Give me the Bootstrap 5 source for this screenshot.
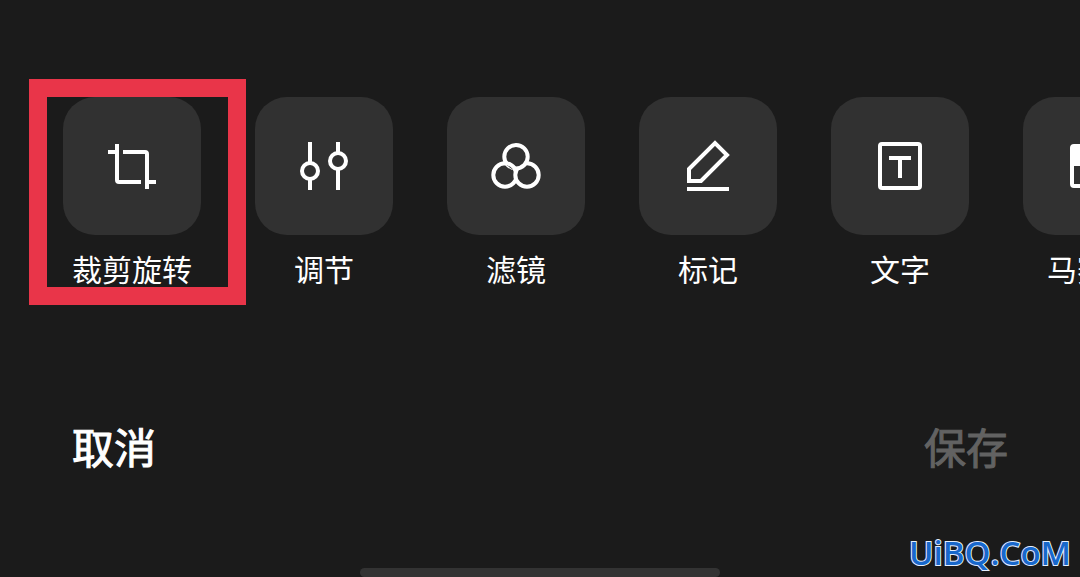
<!DOCTYPE html>
<html lang="zh-CN">
<head>
<meta charset="utf-8">
<meta name="viewport" content="width=device-width, initial-scale=1">
<title>编辑图片</title>
<link href="https://cdn.jsdelivr.net/npm/bootstrap@5.3.0/dist/css/bootstrap.min.css" rel="stylesheet">
<style>
  body { background: #1b1b1b; color: #fff; font-family: "Noto Sans CJK SC", sans-serif; }
  .tools { gap: 54px; padding: 97px 0 24px 63px; }
  .tool { width: 138px; font-size: 30px; line-height: 44px; color: #fff; }
  .tile { width: 138px; height: 138px; border-radius: 32px; background: #313131; margin-bottom: 11px; }
  .tile svg { width: 60px; height: 60px; fill: none; stroke: #fff; stroke-width: 4; }
  .highlight { top: -18px; left: -34px; width: 217px; height: 226px; border: 18px solid #e93549; pointer-events: none; }
  .actions { padding: 0 72px; margin-top: 102px; }
  .action { font-size: 42px; line-height: 60px; color: #fff; -webkit-text-stroke: 1px; }
  .action:disabled { color: #626262; }
  .home-bar { width: 33.333%; height: 9px; border-radius: 5px; background: #333; }
  .watermark { right: 9px; bottom: 4px; font: 600 33px/40px "Open Sans", sans-serif; color: #1868cc; -webkit-text-stroke: 2px #e4efff; paint-order: stroke fill; }
</style>
</head>
<body class="vh-100 overflow-hidden position-relative d-flex flex-column">
<nav class="tools d-flex overflow-hidden flex-shrink-0" aria-label="编辑工具">
  <button type="button" class="tool border-0 bg-transparent p-0 flex-shrink-0 text-nowrap position-relative">
    <span class="tile d-flex align-items-center justify-content-center">
      <svg viewBox="0 0 60 60" aria-hidden="true"><path d="M15 8V44Q15 46 17 46H39M6 16H13M21 16H43Q45 16 45 18V53M47 46H54"/></svg>
    </span>裁剪旋转
    <span class="highlight position-absolute"></span>
  </button>
  <button type="button" class="tool border-0 bg-transparent p-0 flex-shrink-0 text-nowrap">
    <span class="tile d-flex align-items-center justify-content-center">
      <svg viewBox="0 0 60 60" aria-hidden="true"><path d="M16 6V27M16 43V54M44 6V17M44 33V54"/><circle cx="16" cy="35" r="8"/><circle cx="44" cy="25" r="8"/></svg>
    </span>调节
  </button>
  <button type="button" class="tool border-0 bg-transparent p-0 flex-shrink-0 text-nowrap">
    <span class="tile d-flex align-items-center justify-content-center">
      <svg viewBox="0 0 60 60" aria-hidden="true"><g fill="#313131"><circle cx="19" cy="39" r="11.7"/><circle cx="41" cy="39" r="11.7"/><circle cx="30" cy="20.7" r="11.7"/><path d="M18 27.3A11.7 11.7 0 0 1 30.3 36"/></g></svg>
    </span>滤镜
  </button>
  <button type="button" class="tool border-0 bg-transparent p-0 flex-shrink-0 text-nowrap">
    <span class="tile d-flex align-items-center justify-content-center">
      <svg viewBox="0 0 60 60" aria-hidden="true"><path d="M11 33L37 7L49 19L23 45H11ZM9 53H51"/></svg>
    </span>标记
  </button>
  <button type="button" class="tool border-0 bg-transparent p-0 flex-shrink-0 text-nowrap">
    <span class="tile d-flex align-items-center justify-content-center">
      <svg viewBox="0 0 60 60" aria-hidden="true"><rect x="10" y="8" width="40" height="44" rx="2"/><path d="M19 22H41M30 22V42"/></svg>
    </span>文字
  </button>
  <button type="button" class="tool border-0 bg-transparent p-0 flex-shrink-0 text-nowrap">
    <span class="tile d-flex align-items-center justify-content-center">
      <svg viewBox="0 0 60 60" aria-hidden="true"><rect x="10" y="10" width="40" height="40" rx="2"/><path fill="#fff" stroke="none" d="M10 10H30V30H10ZM30 30H50V50H30Z"/></svg>
    </span>马赛克
  </button>
</nav>
<div class="actions d-flex justify-content-between">
  <button type="button" class="action border-0 bg-transparent p-0">取消</button>
  <button type="button" class="action border-0 bg-transparent p-0" disabled>保存</button>
</div>
<div class="home-bar mt-auto mx-auto flex-shrink-0"></div>
<div class="watermark position-absolute">UiBQ.CoM</div>
<script src="https://cdn.jsdelivr.net/npm/bootstrap@5.3.0/dist/js/bootstrap.bundle.min.js"></script>
</body>
</html>
